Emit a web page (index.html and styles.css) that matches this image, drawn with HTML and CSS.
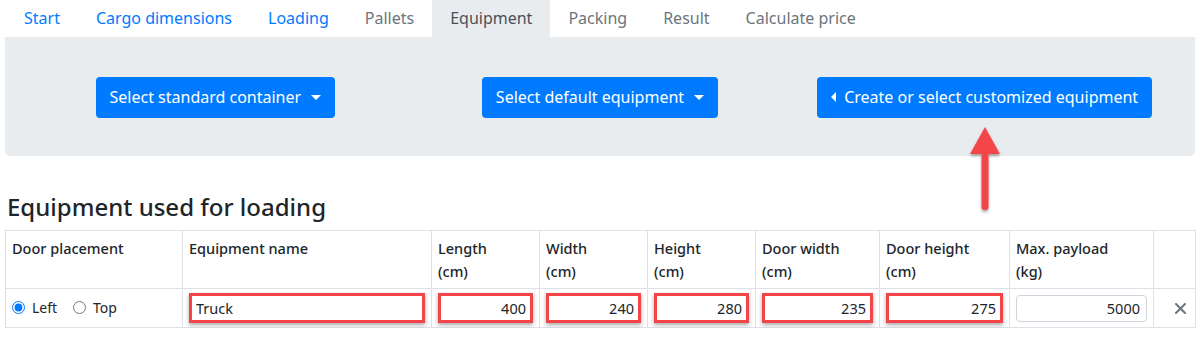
FILE: index.html
```html
<!DOCTYPE html>
<html lang="en">
<head>
    <meta charset="UTF-8">
    <meta name="viewport" content="width=device-width, initial-scale=1.0">
    <title>Equipment</title>
    <link rel="stylesheet" href="styles.css">
</head>
<body>
    <div class="page">
        <ul class="tabs">
            <li><a href="#" class="tab">Start</a></li>
            <li><a href="#" class="tab">Cargo dimensions</a></li>
            <li><a href="#" class="tab">Loading</a></li>
            <li><a href="#" class="tab muted">Pallets</a></li>
            <li><a href="#" class="tab active">Equipment</a></li>
            <li><a href="#" class="tab muted">Packing</a></li>
            <li><a href="#" class="tab muted">Result</a></li>
            <li><a href="#" class="tab muted">Calculate price</a></li>
        </ul>

        <div class="panel">
            <div class="panel-col">
                <button class="btn caret-down">Select standard container</button>
            </div>
            <div class="panel-col">
                <button class="btn caret-down">Select default equipment</button>
            </div>
            <div class="panel-col">
                <button class="btn caret-left">Create or select customized equipment</button>
            </div>
        </div>

        <!-- annotation arrow pointing at the custom equipment button -->
        <svg class="arrow" width="40" height="92" viewBox="0 0 40 92">
            <defs>
                <filter id="shadow" x="-50%" y="-20%" width="200%" height="150%">
                    <feDropShadow dx="0" dy="2" stdDeviation="1.5" flood-color="#000" flood-opacity="0.35"/>
                </filter>
            </defs>
            <g filter="url(#shadow)">
                <polygon points="20,2 35,29 5,29" fill="#f44449"/>
                <rect x="16.5" y="27" width="7" height="58" rx="3" fill="#f44449"/>
            </g>
        </svg>

        <h2 class="title">Equipment used for loading</h2>

        <table class="equip">
            <colgroup>
                <col style="width:177px">
                <col style="width:249px">
                <col style="width:108px">
                <col style="width:108px">
                <col style="width:108px">
                <col style="width:124px">
                <col style="width:130px">
                <col style="width:144px">
                <col style="width:42px">
            </colgroup>
            <thead>
                <tr>
                    <th>Door placement</th>
                    <th>Equipment name</th>
                    <th>Length<br>(cm)</th>
                    <th>Width<br>(cm)</th>
                    <th>Height<br>(cm)</th>
                    <th>Door width<br>(cm)</th>
                    <th>Door height<br>(cm)</th>
                    <th>Max. payload<br>(kg)</th>
                    <th></th>
                </tr>
            </thead>
            <tbody>
                <tr>
                    <td>
                        <label class="radio"><input type="radio" name="door" checked> Left</label>
                        <label class="radio"><input type="radio" name="door"> Top</label>
                    </td>
                    <td><input class="field marked" type="text" value="Truck"></td>
                    <td><input class="field marked num" type="text" value="400"></td>
                    <td><input class="field marked num" type="text" value="240"></td>
                    <td><input class="field marked num" type="text" value="280"></td>
                    <td><input class="field marked num" type="text" value="235"></td>
                    <td><input class="field marked num" type="text" value="275"></td>
                    <td><input class="field plain num" type="text" value="5000"></td>
                    <td class="remove">
                        <svg width="11" height="11" viewBox="0 0 11 11">
                            <path d="M1 1 L10 10 M10 1 L1 10" stroke="#6c757d" stroke-width="2" stroke-linecap="round"/>
                        </svg>
                    </td>
                </tr>
            </tbody>
        </table>
    </div>
</body>
</html>
```

FILE: styles.css
```css
body {
    margin: 0;
    font-family: "Noto Sans", "Open Sans", sans-serif;
    color: #212529;
    background-color: #fff;
}
.page {
    position: relative;
    padding: 0 5px;
}
.tabs {
    display: flex;
    list-style: none;
    margin: 0;
    padding: 0 0 0 1px;
}
.tab {
    display: block;
    padding: 6px 18px 7px;
    font-size: 16px;
    line-height: 24px;
    color: #007bff;
    text-decoration: none;
}
.tab.muted {
    color: #6c757d;
}
.tab.active {
    color: #495057;
    background-color: #e9ecef;
}
.panel {
    display: grid;
    grid-template-columns: 1fr 1fr 1fr;
    justify-items: center;
    padding: 40px 18px 38px;
    background-color: #e9ecef;
    border-radius: 0 0 5px 5px;
}
.btn {
    font-family: inherit;
    font-size: 16px;
    line-height: 25px;
    padding: 8px 14px;
    color: #fff;
    background-color: #007bff;
    border: none;
    border-radius: 4px;
    cursor: pointer;
}
.caret-down::after {
    content: "";
    display: inline-block;
    margin-left: 10px;
    vertical-align: 3px;
    border-top: 5px solid #fff;
    border-left: 5px solid transparent;
    border-right: 5px solid transparent;
}
.caret-left::before {
    content: "";
    display: inline-block;
    margin-right: 8px;
    vertical-align: 1px;
    border-right: 5px solid #fff;
    border-top: 5px solid transparent;
    border-bottom: 5px solid transparent;
}
.arrow {
    position: absolute;
    left: 965px;
    top: 125px;
}
.title {
    margin: 36px 0 8px 2px;
    font-size: 24px;
    font-weight: 500;
    line-height: 30px;
}
.equip {
    width: 1190px;
    table-layout: fixed;
    border-collapse: collapse;
    font-size: 14.5px;
}
.equip th,
.equip td {
    border: 1px solid #dee2e6;
    text-align: left;
    vertical-align: top;
}
.equip th {
    padding: 6px 6px 5px;
    font-weight: 500;
    line-height: 23px;
}
.equip td {
    padding: 4px 6px 4px;
    vertical-align: middle;
}
.radio {
    display: inline-flex;
    align-items: center;
    margin-right: 12px;
    font-size: 14px;
}
.radio input {
    width: 13px;
    height: 13px;
    margin: 0 7px 0 0;
    accent-color: #007bff;
}
.field {
    box-sizing: border-box;
    width: 100%;
    font-family: inherit;
    font-size: 14.5px;
    color: #212529;
    background-color: #fff;
    outline: none;
}
.field.marked {
    height: 30px;
    padding: 0 4px;
    border: 3px solid #f24449;
    box-shadow: 0 2px 4px rgba(0, 0, 0, 0.35);
}
.field.plain {
    height: 27px;
    padding: 0 6px;
    border: 1px solid #ced4da;
    border-radius: 4px;
}
.num {
    text-align: right;
}
.equip td.remove {
    padding-left: 21px;
}
.remove svg {
    display: block;
}
```
